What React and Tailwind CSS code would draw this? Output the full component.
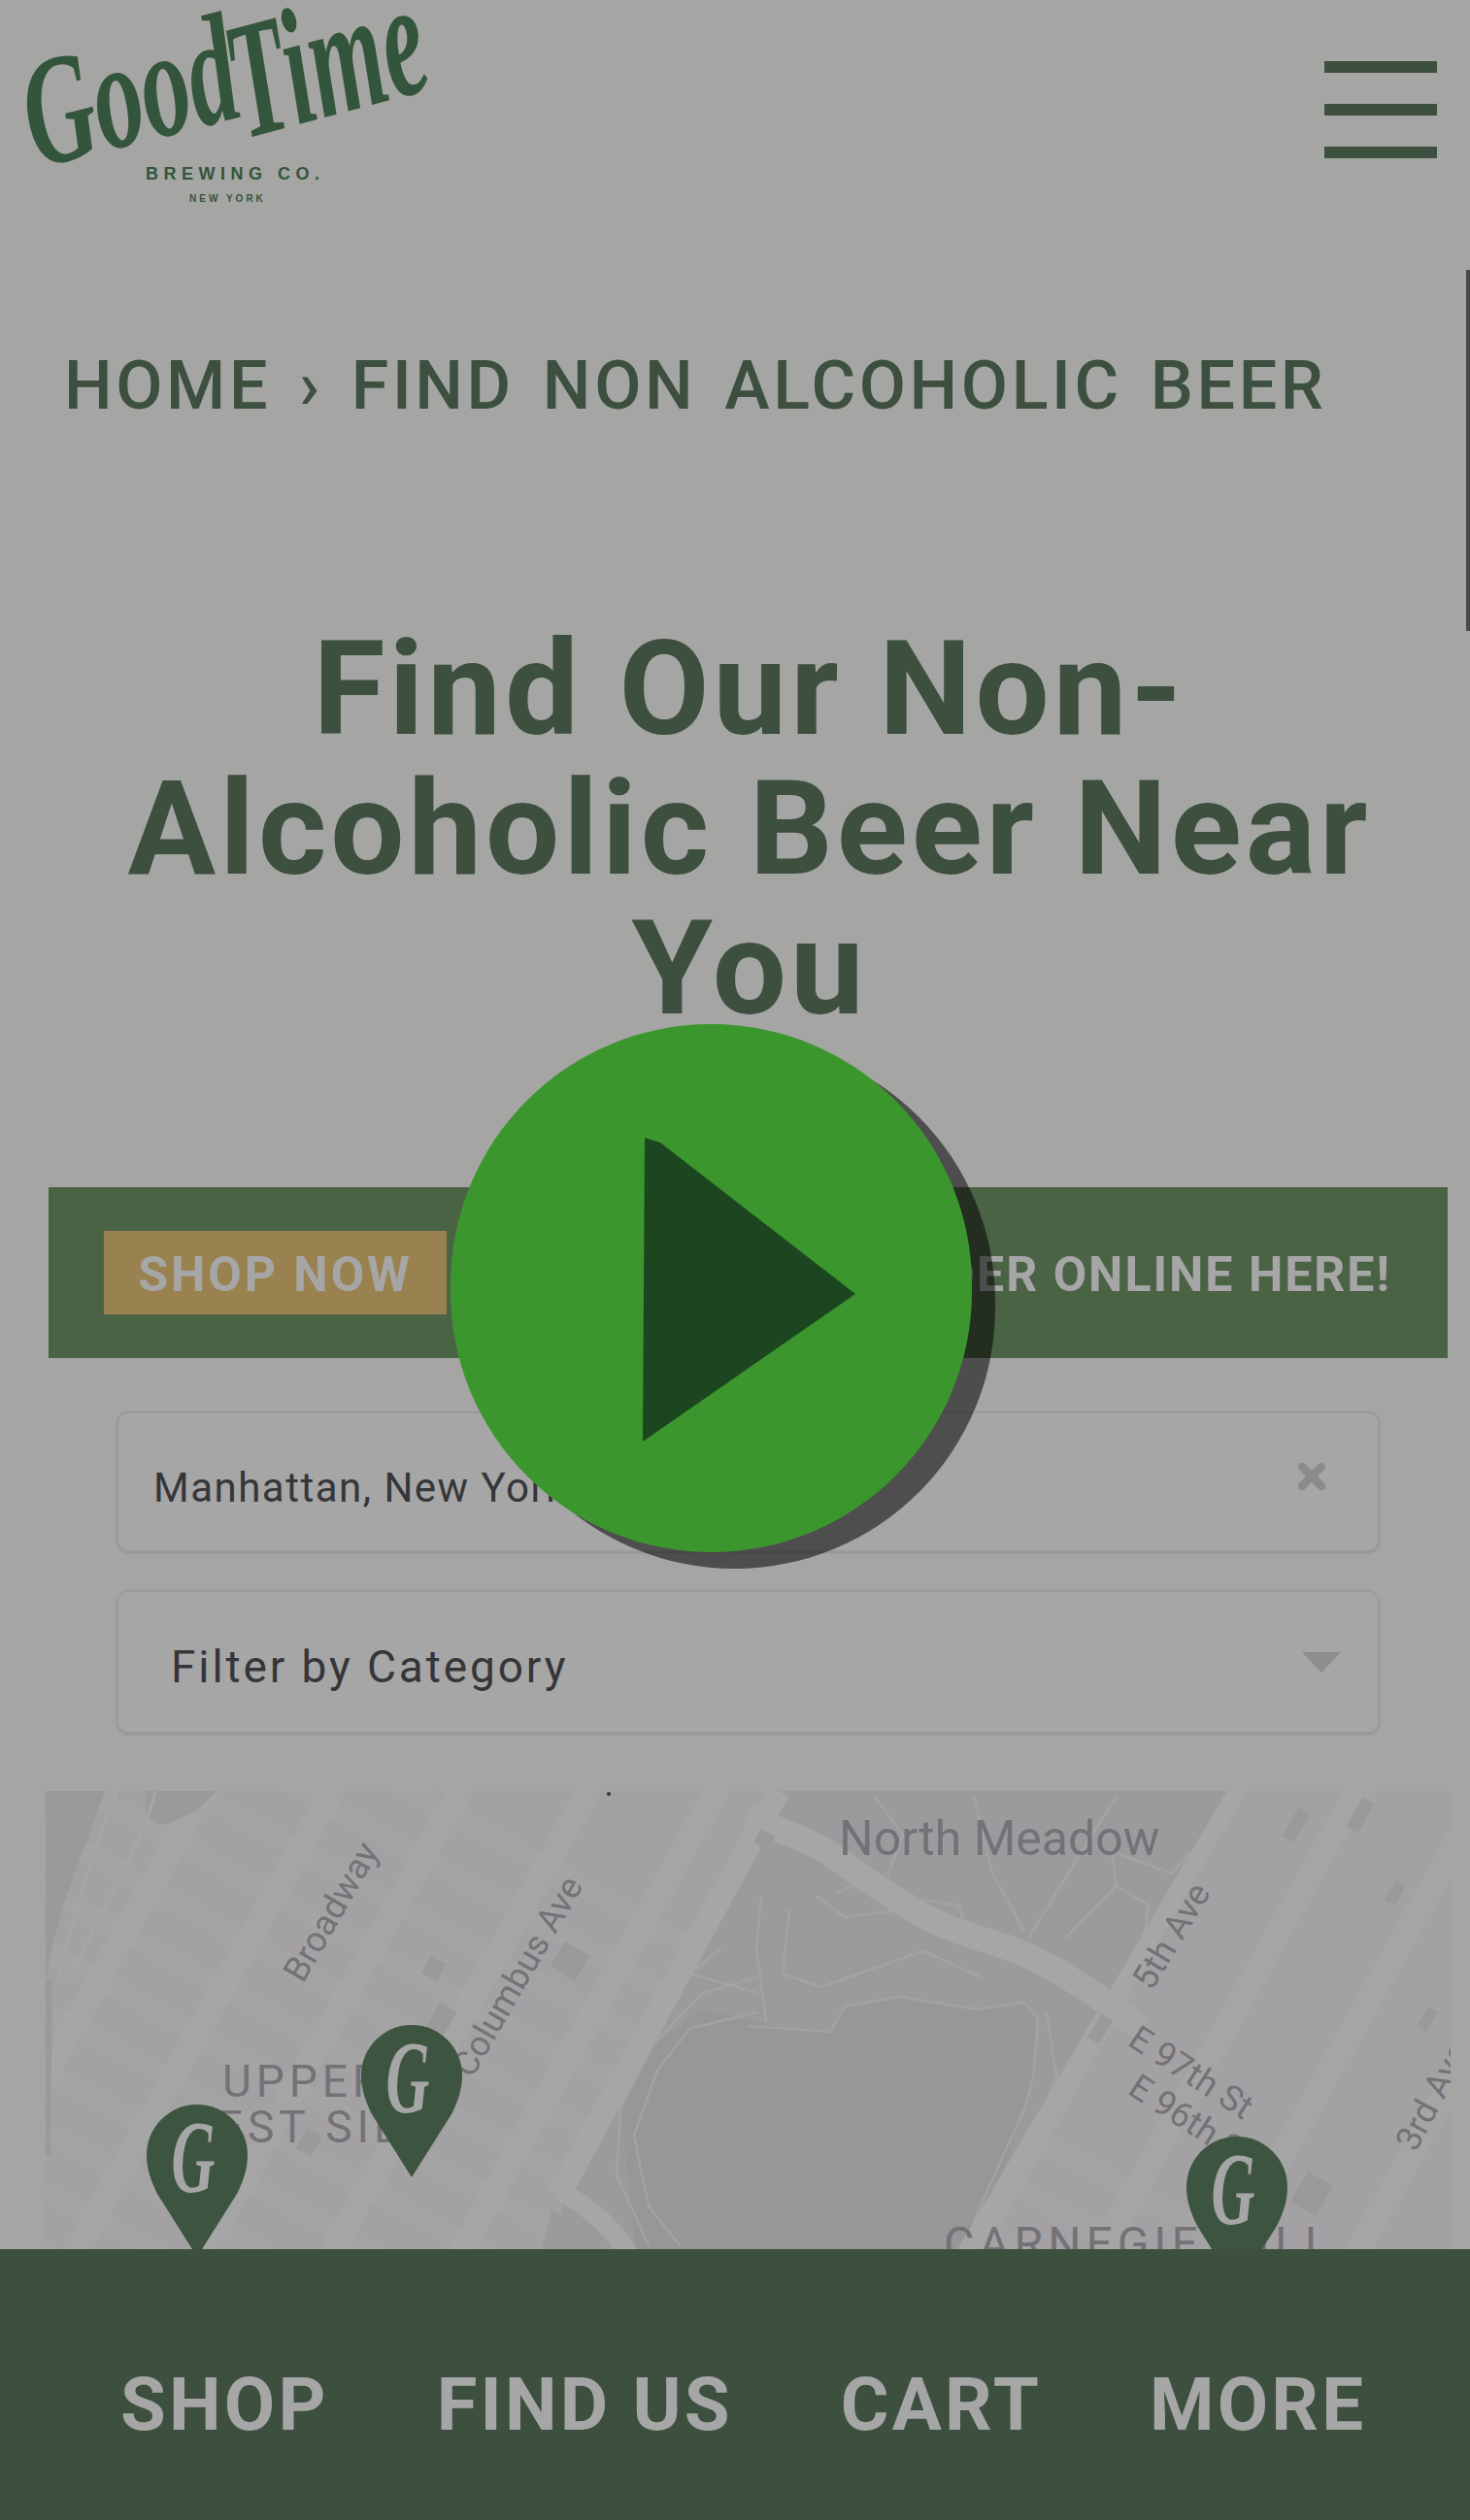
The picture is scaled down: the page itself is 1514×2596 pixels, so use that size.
import { X } from 'lucide-react'

const streets = Array.from({ length: 26 }, (_, i) => i)
const avenues = Array.from({ length: 14 }, (_, i) => i)
const blocks = [
  [587, 2020, 30, 30], [447, 2028, 18, 20], [455, 2080, 20, 28], [318, 2207, 18, 24],
  [1351, 2260, 30, 36], [1335, 1880, 14, 34], [1401, 1870, 14, 34], [1437, 1950, 12, 24],
  [1470, 2080, 12, 24], [1133, 2090, 14, 28], [787, 1895, 16, 16],
]
// footpaths in the park, traced by eye from the map
const parkPaths = [
  '770,2087 855,2093 870,2067 927,2057 1007,2070 1055,2063 1069,2080 1064,2140 1055,2173 1003,2287',
  '784,1953 779,2007 789,2083',
  '841,1953 870,1975 931,1967',
  '813,1967 806,2033 846,2047 950,2010 1012,2037',
  '1055,1990 1021,1927 1003,1850',
  '1059,1997 1102,1927 1150,1850',
  '1097,1997 1150,1943 1183,1963 1178,2000 1145,2053',
  '1150,1943 1145,1907 1207,1930 1226,1907',
  '1078,2073 1088,2140 1060,2207 1003,2290',
  '950,1957 988,1963 993,1983',
  '780,2037 724,2053 672,2107 639,2173 635,2240 668,2313',
  '780,2073 710,2090 677,2133 653,2200 668,2273 700,2313',
  '743,2007 710,2033 780,2053',
  '900,1850 930,1890 915,1930 860,1950',
]

function Pin({ className }) {
  return (
    <svg viewBox="0 0 104 157" className={className}>
      <path d="M52 0C23.3 0 0 23.3 0 52C0 67 5 80 11 92L52 157L93 92C99 80 104 67 104 52C104 23.3 80.7 0 52 0Z" fill="#5e8363" />
      <text textAnchor="middle" fontSize="62" fontStyle="italic" fontWeight="700" fontFamily="'Liberation Serif', serif" fill="#ffffff" transform="translate(48 90) scale(1 1.7)">G</text>
    </svg>
  )
}

function Logo() {
  return (
    <svg viewBox="0 0 413 197" className="w-[413px] h-[197px] overflow-visible">
      <g fill="#4f835b" fontFamily="'Liberation Serif', serif" fontStyle="italic" fontWeight="700">
        <text fontSize="100" transform="translate(10 160) rotate(-14) scale(1 1.6)">Good</text>
        <text fontSize="98" transform="translate(224 130) rotate(-15) scale(1 1.75)">Time</text>
      </g>
      <text x="122" y="172" fontSize="18" fontWeight="700" letterSpacing="5.5" fontFamily="'Liberation Sans', sans-serif" fill="#4f835b">BREWING CO.</text>
      <text x="167" y="195" fontSize="10" fontWeight="700" letterSpacing="3" fontFamily="'Liberation Sans', sans-serif" fill="#4f835b">NEW YORK</text>
    </svg>
  )
}

function MapPanel() {
  return (
    <div className="relative ml-[46px] mr-[20px] mt-[59px] h-[480px] overflow-hidden">
      <svg viewBox="46 1845 1448 480" className="w-[1448px] h-[480px] block">
        <rect x="46" y="1845" width="1448" height="480" fill="#faf8fa" />
        {streets.map((i) => (
          <line key={i} x1={-200} y1={1500 + i * 62} x2={1700} y2={1500 + i * 62 + 1053} stroke="#ffffff" strokeOpacity="0.6" strokeWidth="20" />
        ))}
        {avenues.map((i) => (
          <line key={i} x1={100 + i * 132} y1={1805} x2={i * 132 - 200} y2={2345} stroke="#ffffff" strokeOpacity="0.8" strokeWidth="26" />
        ))}
        <path d="M47 1845H108C90 1900 60 1960 47 2040Z" fill="#eeebf0" />
        <path d="M150 1845H222C210 1862 190 1875 165 1880L150 1870Z" fill="#eeebf0" />
        <path d="M47 2040L54 2040L52 2220L47 2220Z" fill="#eeebf0" />
        <path d="M120 1845C100 1900 80 1950 60 2040" fill="none" stroke="#ffffff" strokeWidth="3" />
        <path d="M160 1845C150 1890 110 1960 70 2040" fill="none" stroke="#ffffff" strokeWidth="3" />
        <path d="M802 1845H1272L998 2325H575L580 2255Z" fill="#f0edf1" />
        <path d="M555 2325L568 2277L660 2325Z" fill="#f0edf1" />
        <path d="M672 2107L724 2070L800 2087L855 2093L870 2067L927 2057L1007 2070L1055 2063L1069 2080L1064 2140L1055 2173L1003 2325H655L639 2173Z" fill="#eae7ec" />
        <path d="M770 1870C800 1885 830 1895 851 1907C890 1935 920 1955 950 1973C990 1995 1030 2000 1064 2017C1100 2035 1130 2055 1175 2090" fill="none" stroke="#ffffff" strokeWidth="26" />
        <path d="M802 1845L575 2262" fill="none" stroke="#ffffff" strokeWidth="24" />
        <path d="M1274 1845L992 2325" fill="none" stroke="#ffffff" strokeWidth="18" />
        <path d="M578 2258C610 2275 630 2295 650 2325" fill="none" stroke="#ffffff" strokeWidth="20" />
        {parkPaths.map((points) => (
          <polyline key={points} points={points} fill="none" stroke="#ffffff" strokeOpacity="0.75" strokeWidth="2.5" strokeLinejoin="round" />
        ))}
        {blocks.map(([x, y, w, h]) => (
          <rect key={`${x}-${y}`} x={x - w / 2} y={y - h / 2} width={w} height={h} fill="#eeebf0" transform={`rotate(30 ${x} ${y})`} />
        ))}
        <circle cx="627" cy="1848" r="2" fill="#555555" />
        <g fontFamily="Roboto, sans-serif" fill="#b2afb6">
          <text x="864" y="1911" fontSize="50">North Meadow</text>
          <text fontSize="36" transform="translate(312 2044) rotate(-60)">Broadway</text>
          <text fontSize="36" transform="translate(486 2142) rotate(-60)">Columbus Ave</text>
          <text fontSize="36" transform="translate(1186 2052) rotate(-59)">5th Ave</text>
          <text fontSize="36" transform="translate(1160 2106) rotate(33)">E 97th St</text>
          <text fontSize="36" transform="translate(1160 2156) rotate(33)">E 96th St</text>
          <text fontSize="36" transform="translate(1458 2218) rotate(-62)">3rd Ave</text>
          <text x="229" y="2160" fontSize="46" letterSpacing="5">UPPER</text>
          <text x="178" y="2207" fontSize="46" letterSpacing="5">WEST SIDE</text>
          <text x="972" y="2328" fontSize="48" letterSpacing="5">CARNEGIE HILL</text>
        </g>
      </svg>
      <Pin className="absolute left-[326px] top-[241px] w-[104px] h-[157px]" />
      <Pin className="absolute left-[105px] top-[323px] w-[104px] h-[157px]" />
      <Pin className="absolute left-[1176px] top-[356px] w-[104px] h-[157px]" />
    </div>
  )
}

export default function App() {
  return (
    <div className="relative h-screen overflow-hidden flex flex-col bg-[#fefefb] font-['Roboto',sans-serif]">
      <main className="flex-1 min-h-0 overflow-hidden">
        <header className="flex justify-between items-start pl-[28px] pr-[34px] pt-[13px]">
          <Logo />
          <div className="flex flex-col gap-[32px] mt-[50px]">
            <div className="w-[116px] h-[12px] bg-[#5e7a61]" />
            <div className="w-[116px] h-[12px] bg-[#5e7a61]" />
            <div className="w-[116px] h-[12px] bg-[#5e7a61]" />
          </div>
        </header>

        <p className="mt-[152px] ml-[66px] text-[70px] leading-[70px] font-medium text-[#5e7a61] whitespace-nowrap tracking-[3.6px] [word-spacing:8px]">
          HOME › FIND NON ALCOHOLIC BEER
        </p>

        <h1 className="mt-[206px] pl-[30px] text-center text-[135px] leading-[144px] font-bold tracking-[4px] text-[#5e7a61]">
          Find Our Non-<br />Alcoholic Beer Near<br />You
        </h1>

        <div className="mt-[153px] ml-[50px] mr-[23px] h-[176px] pl-[57px] pr-[58px] flex items-center justify-between bg-[#74996a]">
          <a className="w-[353px] h-[86px] pt-[4px] flex items-center justify-center bg-[#ebc87a] text-white text-[50px] font-bold tracking-[3px]">SHOP NOW</a>
          <span className="pt-[4px] text-white text-[50px] font-bold tracking-[2px] whitespace-nowrap">ORDER ONLINE HERE!</span>
        </div>

        <div className="mt-[55px] ml-[120px] mr-[93px] h-[145px] pl-[36px] pr-[48px] flex items-center justify-between bg-white border-2 border-[#eeeeee] rounded-[12px] shadow-sm">
          <span className="pt-[12px] text-[42px] text-[#535358] tracking-[1.5px]">Manhattan, New York, NY, USA</span>
          <X size={40} strokeWidth={5} className="mb-[12px] text-[#d6d4d8]" />
        </div>

        <div className="mt-[39px] ml-[120px] mr-[93px] h-[148px] pl-[54px] pr-[38px] flex items-center justify-between bg-white border-2 border-[#eeeeee] rounded-[12px] shadow-sm">
          <span className="pt-[10px] text-[46px] text-[#535358] tracking-[2.9px]">Filter by Category</span>
          <div className="w-0 h-0 border-x-[20px] border-x-transparent border-t-[21px] border-t-[#dadada]" />
        </div>

        <MapPanel />
      </main>

      <nav className="h-[279px] shrink-0 pl-[124px] pt-[40px] flex items-center gap-[111px] bg-[#5e7a61] text-white text-[76px] font-bold tracking-[3.2px]">
        <span>SHOP</span>
        <span>FIND US</span>
        <span>CART</span>
        <span>MORE</span>
      </nav>

      {/* dimmed layer + play button sit on top of the page */}
      <div className="absolute inset-0 bg-black/35" />
      <div className="absolute right-0 top-[278px] w-[4px] h-[372px] bg-[#4a4a48]" />
      <button className="absolute left-[464px] top-[1055px] w-[537px] h-[544px] rounded-full bg-[#3c962e] shadow-[24px_17px_0_rgba(0,0,0,0.53)]">
        <svg viewBox="0 0 537 544" className="absolute inset-0 w-full h-full">
          <path d="M200 117L216 122L417 278L198 430Z" fill="#1c461f" />
        </svg>
      </button>
    </div>
  )
}
